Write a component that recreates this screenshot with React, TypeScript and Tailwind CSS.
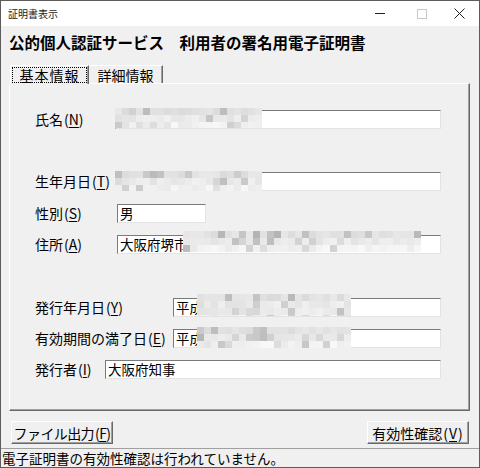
import React from "react";

function Mosaic({ className, w, h, seed, dark = 0 }: { className: string; w: number; h: number; seed: number; dark?: number }) {
  const cell = 7;
  const cols = Math.ceil(w / cell);
  const rows = Math.ceil(h / cell);
  let s = seed;
  const rnd = () => {
    s = (s * 9301 + 49297) % 233280;
    return s / 233280;
  };
  const cells: number[] = [];
  for (let r = 0; r < rows; r++) {
    for (let c = 0; c < cols; c++) {
      const base = r === rows - 1 ? 242 : r === 0 ? 226 : 234;
      let v = base + Math.floor(rnd() * 14) - 7;
      if (rnd() < 0.14 + dark) v -= 14 + Math.floor(rnd() * 22 * (1 + dark * 4));
      cells.push(Math.max(140, Math.min(252, v)));
    }
  }
  return (
    <div className={"absolute flex flex-wrap overflow-hidden " + className}>
      {cells.map((v, i) => (
        <div key={i} className="w-[7px] h-[7px] shrink-0" style={{ backgroundColor: `rgb(${v},${v},${v})` }} />
      ))}
    </div>
  );
}

function Field({ className, children }: { className: string; children?: React.ReactNode }) {
  return (
    <div
      className={
        "relative h-[19px] bg-white border-t border-l border-[#7a7a7a] border-r border-b border-r-[#e3e3e3] border-b-[#e3e3e3] pl-[2px] text-[13.5px] leading-[17px] text-black whitespace-nowrap " +
        className
      }
    >
      {children}
    </div>
  );
}

function Acc({ k, pad = false }: { k: string; pad?: boolean }) {
  return (
    <>
      <span className={pad ? "px-[1px]" : "pl-[1px]"}>(</span>
      <span className="underline underline-offset-2">{k}</span>
      <span className={pad ? "px-[1px]" : ""}>)</span>
    </>
  );
}

function Label({ className, text, k }: { className: string; text: string; k: string }) {
  return (
    <div className={"shrink-0 text-[14px] leading-[19px] text-black whitespace-nowrap " + className}>
      {text}
      <Acc k={k} />
    </div>
  );
}

export default function App() {
  return (
    <div className="w-[480px] h-[468px] border border-[#5c5c5c] flex flex-col bg-[#f0f0f0] font-['Noto_Sans_CJK_JP','Noto_Sans',sans-serif] text-black overflow-hidden">
      {/* Title bar */}
      <div className="h-[25px] bg-white flex items-center shrink-0">
        <div className="pl-[7px] text-[10px] leading-[12px] text-[#1a1a1a] flex-1">証明書表示</div>
        <div className="flex items-center h-full">
          <div className="w-[46px] h-full flex items-center justify-center">
            <div className="w-[10px] h-px bg-[#222]" />
          </div>
          <div className="w-[38px] h-full flex items-center justify-center">
            <div className="w-[10px] h-[10px] border border-[#c8c8c8]" />
          </div>
          <div className="w-[38px] h-full flex items-center justify-center pr-[2px]">
            <svg width="11" height="11" viewBox="0 0 11 11">
              <path d="M0.5 0.5 L10.5 10.5 M10.5 0.5 L0.5 10.5" stroke="#222" strokeWidth="1" fill="none" />
            </svg>
          </div>
        </div>
      </div>

      {/* Body */}
      <div className="flex-1 flex flex-col">
        <div className="mt-[6px] pl-[8px] text-[15.5px] leading-[20px] font-bold text-black whitespace-nowrap">
          公的個人認証サービス　利用者の署名用電子証明書
        </div>

        {/* Tabs */}
        <div className="mt-[13px] ml-[9px] flex items-end h-[18px] relative z-10">
          <div className="w-[79px] h-[19px] mb-[-1px] bg-[#f0f0f0] border-l border-t border-white border-r border-r-[#696969] shadow-[inset_-1px_0_0_#a0a0a0] p-[1px]">
            <div className="h-full border border-dotted border-black flex items-center justify-center text-[14px] leading-[16px] tracking-[1px]">
              基本情報
            </div>
          </div>
          <div className="w-[74px] h-[18px] border-t border-white border-r border-r-[#696969] shadow-[inset_-1px_0_0_#a0a0a0] flex items-center justify-center text-[14px] leading-[16px]">
            詳細情報
          </div>
        </div>

        {/* Panel */}
        <div className="ml-[8px] mr-[9px] h-[328px] border-l border-t border-white border-r border-b border-r-[#696969] border-b-[#696969] shadow-[inset_-1px_-1px_0_#a0a0a0] flex flex-col pl-[25px]">
          <div className="mt-[26px] flex h-[19px]">
            <Label className="w-[80px]" text="氏名" k="N" />
            <Field className="w-[326px]">
              <Mosaic className="left-[-1px] top-[-3px] w-[152px] h-[20px]" w={152} h={20} seed={17} />
            </Field>
          </div>
          <div className="mt-[43px] flex h-[19px]">
            <Label className="w-[80px]" text="生年月日" k="T" />
            <Field className="w-[326px]">
              <Mosaic className="left-[-1px] top-[-2px] w-[151px] h-[20px]" w={151} h={20} seed={53} dark={0.05} />
            </Field>
          </div>
          <div className="mt-[13px] flex h-[19px]">
            <Label className="w-[82px]" text="性別" k="S" />
            <Field className="w-[89px]">男</Field>
          </div>
          <div className="mt-[12px] flex h-[19px]">
            <Label className="w-[82px]" text="住所" k="A" />
            <Field className="w-[324px]">
              大阪府堺市
              <Mosaic className="left-[65px] top-[-5px] w-[244px] h-[21px]" w={244} h={21} seed={91} dark={0.1} />
            </Field>
          </div>
          <div className="mt-[44px] flex h-[19px]">
            <Label className="w-[138px]" text="発行年月日" k="Y" />
            <Field className="w-[268px]">
              平成
              <Mosaic className="left-[23px] top-[-5px] w-[156px] h-[22px]" w={156} h={22} seed={131} dark={0.05} />
            </Field>
          </div>
          <div className="mt-[12px] flex h-[19px]">
            <Label className="w-[138px]" text="有効期間の満了日" k="E" />
            <Field className="w-[268px]">
              平成
              <Mosaic className="left-[23px] top-[-3px] w-[156px] h-[21px]" w={156} h={21} seed={211} dark={0.08} />
            </Field>
          </div>
          <div className="mt-[12px] flex h-[19px]">
            <Label className="w-[70px]" text="発行者" k="I" />
            <Field className="w-[336px]">大阪府知事</Field>
          </div>
        </div>

        {/* Buttons */}
        <div className="mt-[10px] pl-[10px] pr-[10px] flex justify-between">
          <div className="w-[102px] h-[23px] border-t border-l border-white border-r border-b border-r-[#696969] border-b-[#696969] shadow-[inset_-1px_-1px_0_#a0a0a0] flex items-center justify-center text-[14px] leading-[16px] whitespace-nowrap tracking-[-0.6px]">
            ファイル出力<Acc k="F" />
          </div>
          <div className="w-[102px] h-[23px] border-t border-l border-white border-r border-b border-r-[#696969] border-b-[#696969] shadow-[inset_-1px_-1px_0_#a0a0a0] flex items-center justify-center text-[14px] leading-[16px] whitespace-nowrap">
            有効性確認<Acc k="V" pad />
          </div>
        </div>
      </div>

      {/* Status bar */}
      <div className="h-[19px] shrink-0 border-t border-[#a0a0a0] pl-[1px] text-[13.5px] leading-[18px] whitespace-nowrap">
        電子証明書の有効性確認は行われていません。
      </div>
    </div>
  );
}
